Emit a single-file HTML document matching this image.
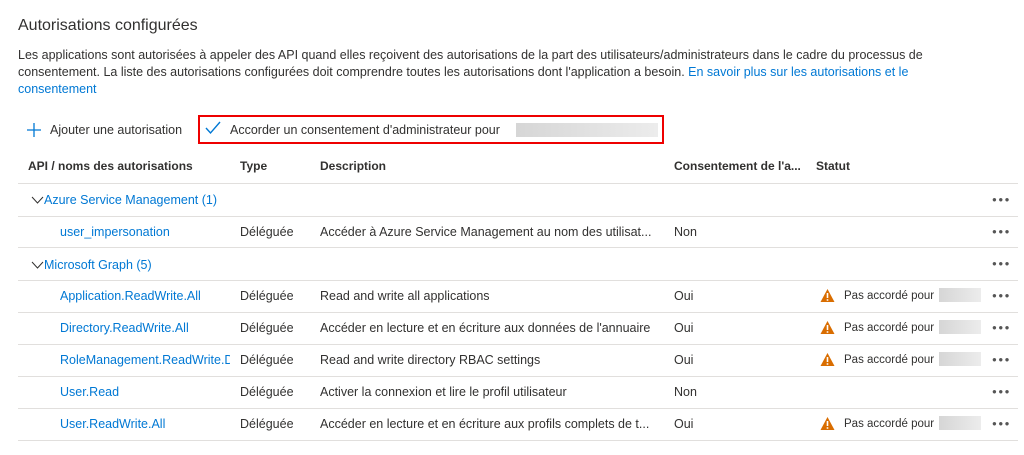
<!DOCTYPE html><html><head><meta charset="utf-8"><style>
body{margin:0;width:1024px;height:455px;background:#fff;font-family:"Liberation Sans",sans-serif;color:#323130;position:relative;overflow:hidden}
.a{position:absolute;white-space:nowrap;font-size:12.5px}
a,.l{color:#0078d4;text-decoration:none}
.ln{position:absolute;left:18px;width:1000px;height:1px;background:#e1dfdd}
.d{position:absolute;left:992px;font-size:8px;letter-spacing:1.5px;color:#555;margin-top:2px}
.g{position:absolute;width:52px;height:14px;background:linear-gradient(90deg,#d6d6d6,#ececec)}
.h{font-weight:bold;font-size:12px}
.p{font-size:11.5px;margin-top:1px}
</style></head><body>
<div class="a" style="left:18px;top:17px;font-size:16px">Autorisations configurées</div>
<div class="a" style="left:18px;top:47px;line-height:17px;white-space:normal;width:960px;font-size:12.5px">Les applications sont autorisées à appeler des API quand elles reçoivent des autorisations de la part des utilisateurs/administrateurs dans le cadre du processus de consentement. La liste des autorisations configurées doit comprendre toutes les autorisations dont l'application a besoin. <a>En savoir plus sur les autorisations et le consentement</a></div>
<svg style="position:absolute;left:26px;top:122px" width="16" height="16"><path d="M8 1v14M1 8h14" stroke="#0078d4" stroke-width="1.3"/></svg>
<div class="a" style="left:50px;top:123px">Ajouter une autorisation</div>
<div style="position:absolute;left:198px;top:115px;width:462px;height:25px;border:2px solid #e00"></div>
<svg style="position:absolute;left:205px;top:121px" width="16" height="14"><path d="M1 7l4.5 5L15 1" stroke="#0078d4" stroke-width="1.4" fill="none"/></svg>
<div class="a" style="left:230px;top:123px">Accorder un consentement d'administrateur pour</div>
<div class="g" style="left:516px;top:123px;width:142px"></div>
<div class="a h" style="left:28px;top:159px">API / noms des autorisations</div>
<div class="a h" style="left:240px;top:159px">Type</div>
<div class="a h" style="left:320px;top:159px">Description</div>
<div class="a h" style="left:674px;top:159px">Consentement de l'a...</div>
<div class="a h" style="left:816px;top:159px">Statut</div>
<div class="ln" style="top:183px"></div>
<div class="ln" style="top:216px"></div>
<div class="ln" style="top:247px"></div>
<div class="ln" style="top:280px"></div>
<div class="ln" style="top:312px"></div>
<div class="ln" style="top:344px"></div>
<div class="ln" style="top:376px"></div>
<div class="ln" style="top:408px"></div>
<div class="ln" style="top:440px"></div>
<svg style="position:absolute;left:31px;top:196px" width="13" height="8"><path d="M1 1l5.5 6L12 1" stroke="#323130" fill="none"/></svg>
<div class="a l" style="left:44px;top:193px">Azure Service Management (1)</div>
<div class="d" style="top:193px">●●●</div>
<div class="a l" style="left:60px;top:225px">user_impersonation</div><div class="a" style="left:240px;top:225px">Déléguée</div><div class="a" style="left:320px;top:225px">Accéder à Azure Service Management au nom des utilisat...</div><div class="a" style="left:674px;top:225px">Non</div><div class="d" style="top:225px">●●●</div>
<svg style="position:absolute;left:31px;top:261px" width="13" height="8"><path d="M1 1l5.5 6L12 1" stroke="#323130" fill="none"/></svg>
<div class="a l" style="left:44px;top:258px">Microsoft Graph (5)</div>
<div class="d" style="top:257px">●●●</div>
<div class="a l" style="left:60px;top:289px">Application.ReadWrite.All</div><div class="a" style="left:240px;top:289px">Déléguée</div><div class="a" style="left:320px;top:289px">Read and write all applications</div><div class="a" style="left:674px;top:289px">Oui</div><div class="d" style="top:289px">●●●</div>
<div class="a l" style="left:60px;top:321px">Directory.ReadWrite.All</div><div class="a" style="left:240px;top:321px">Déléguée</div><div class="a" style="left:320px;top:321px">Accéder en lecture et en écriture aux données de l'annuaire</div><div class="a" style="left:674px;top:321px">Oui</div><div class="d" style="top:321px">●●●</div>
<div class="a l" style="left:60px;top:353px;width:170px;overflow:hidden">RoleManagement.ReadWrite.Directory</div><div class="a" style="left:240px;top:353px">Déléguée</div><div class="a" style="left:320px;top:353px">Read and write directory RBAC settings</div><div class="a" style="left:674px;top:353px">Oui</div><div class="d" style="top:353px">●●●</div>
<div class="a l" style="left:60px;top:385px">User.Read</div><div class="a" style="left:240px;top:385px">Déléguée</div><div class="a" style="left:320px;top:385px">Activer la connexion et lire le profil utilisateur</div><div class="a" style="left:674px;top:385px">Non</div><div class="d" style="top:385px">●●●</div>
<div class="a l" style="left:60px;top:417px">User.ReadWrite.All</div><div class="a" style="left:240px;top:417px">Déléguée</div><div class="a" style="left:320px;top:417px">Accéder en lecture et en écriture aux profils complets de t...</div><div class="a" style="left:674px;top:417px">Oui</div><div class="d" style="top:417px">●●●</div>
<svg width="0" height="0" style="position:absolute"><defs><g id="w"><path d="M7.5 1L14.5 14H0.5Z" fill="#d96d00"/><path d="M7.5 5v5M7.5 11.3v1.4" stroke="#fff" stroke-width="1.6"/></g></defs></svg>
<svg style="position:absolute;left:820px;top:288px" width="15" height="15"><use href="#w"/></svg><div class="a p" style="left:844px;top:289px">Pas accordé pour</div><div class="g" style="left:939px;top:288px;width:42px"></div>
<svg style="position:absolute;left:820px;top:320px" width="15" height="15"><use href="#w"/></svg><div class="a p" style="left:844px;top:321px">Pas accordé pour</div><div class="g" style="left:939px;top:320px;width:42px"></div>
<svg style="position:absolute;left:820px;top:352px" width="15" height="15"><use href="#w"/></svg><div class="a p" style="left:844px;top:353px">Pas accordé pour</div><div class="g" style="left:939px;top:352px;width:42px"></div>
<svg style="position:absolute;left:820px;top:416px" width="15" height="15"><use href="#w"/></svg><div class="a p" style="left:844px;top:417px">Pas accordé pour</div><div class="g" style="left:939px;top:416px;width:42px"></div>
</body></html>
